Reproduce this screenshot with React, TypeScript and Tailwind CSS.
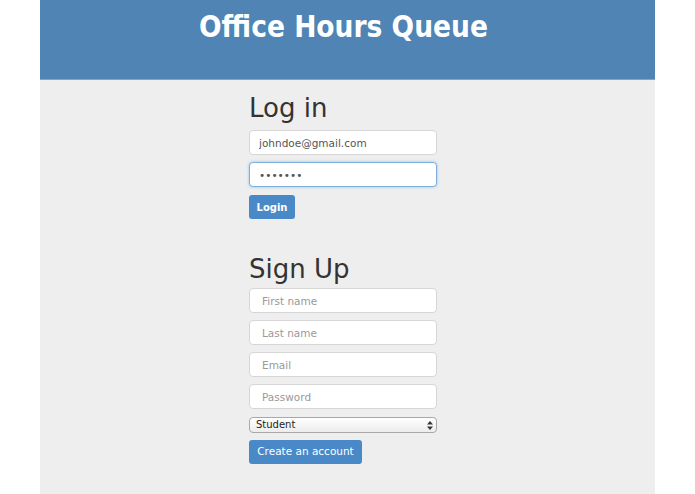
import { useState } from 'react';

const inputBase =
  'block w-full h-[25px] rounded-[4px] border bg-white text-[10.5px] text-[#555] outline-none placeholder:text-[#999]';

function TextField({ placeholder, type = 'text', value, focused }: { placeholder?: string; type?: string; value?: string; focused?: boolean }) {
  return (
    <input
      type={type}
      defaultValue={value}
      placeholder={placeholder}
      className={
        inputBase +
        (focused
          ? ' border-[#7fb0dc] shadow-[0_0_3px_rgba(102,175,233,0.7)]'
          : ' border-[#d6d6d6]') +
        (value ? ' px-[9px]' : ' px-3')
      }
    />
  );
}

export default function App() {
  const [role, setRole] = useState('Student');

  return (
    <div className="min-h-[494px] bg-white font-['DejaVu_Sans','Liberation_Sans',sans-serif]">
      <div className="mx-10 min-h-[494px] bg-[#eeeeee]">
        <header className="h-[80px] bg-[#4f84b4] border-b border-[#7ea6cc] pt-[9px] text-center">
          <h1 className="pr-2 text-[29.5px] font-bold text-white font-['DejaVu_Sans_Condensed','DejaVu_Sans',sans-serif] leading-[36px]">
            Office Hours Queue
          </h1>
        </header>

        <main className="w-[188px] ml-[209px] pt-[12px]">
          <h2 className="text-[26px] leading-[32px] text-[#333]">Log in</h2>
          <div className="mt-[6px] space-y-[7px]">
            <TextField value="johndoe@gmail.com" />
            <TextField type="password" value="1234567" focused />
          </div>
          <button className="mt-[8px] h-[24px] w-[46px] rounded-[3px] bg-[#4a89c7] text-[10px] font-bold text-white">
            Login
          </button>

          <h2 className="mt-[36px] text-[26px] leading-[29px] text-[#333]">Sign Up</h2>
          <div className="mt-[4px] space-y-[7px]">
            <TextField placeholder="First name" />
            <TextField placeholder="Last name" />
            <TextField placeholder="Email" />
            <TextField type="password" placeholder="Password" />
          </div>
          <div className="relative mt-[8px]">
            <select
              value={role}
              onChange={(e) => setRole(e.target.value)}
              className="block h-[16px] w-full appearance-none rounded-[4px] border border-[#a9a9a9] bg-gradient-to-b from-white to-[#ececec] pl-[6px] text-[10px] leading-[14px] text-[#222] outline-none"
            >
              <option>Student</option>
              <option>Instructor</option>
            </select>
            <svg className="pointer-events-none absolute right-[4px] top-[3.5px]" width="6" height="9" viewBox="0 0 6 9">
              <path d="M3 0 L6 3.5 H0 Z" fill="#333" />
              <path d="M3 9 L6 5.5 H0 Z" fill="#333" />
            </svg>
          </div>
          <button className="mt-[7px] h-[24px] w-[113px] rounded-[3px] bg-[#4a89c7] text-[10.5px] text-white">
            Create an account
          </button>
        </main>
      </div>
    </div>
  );
}
